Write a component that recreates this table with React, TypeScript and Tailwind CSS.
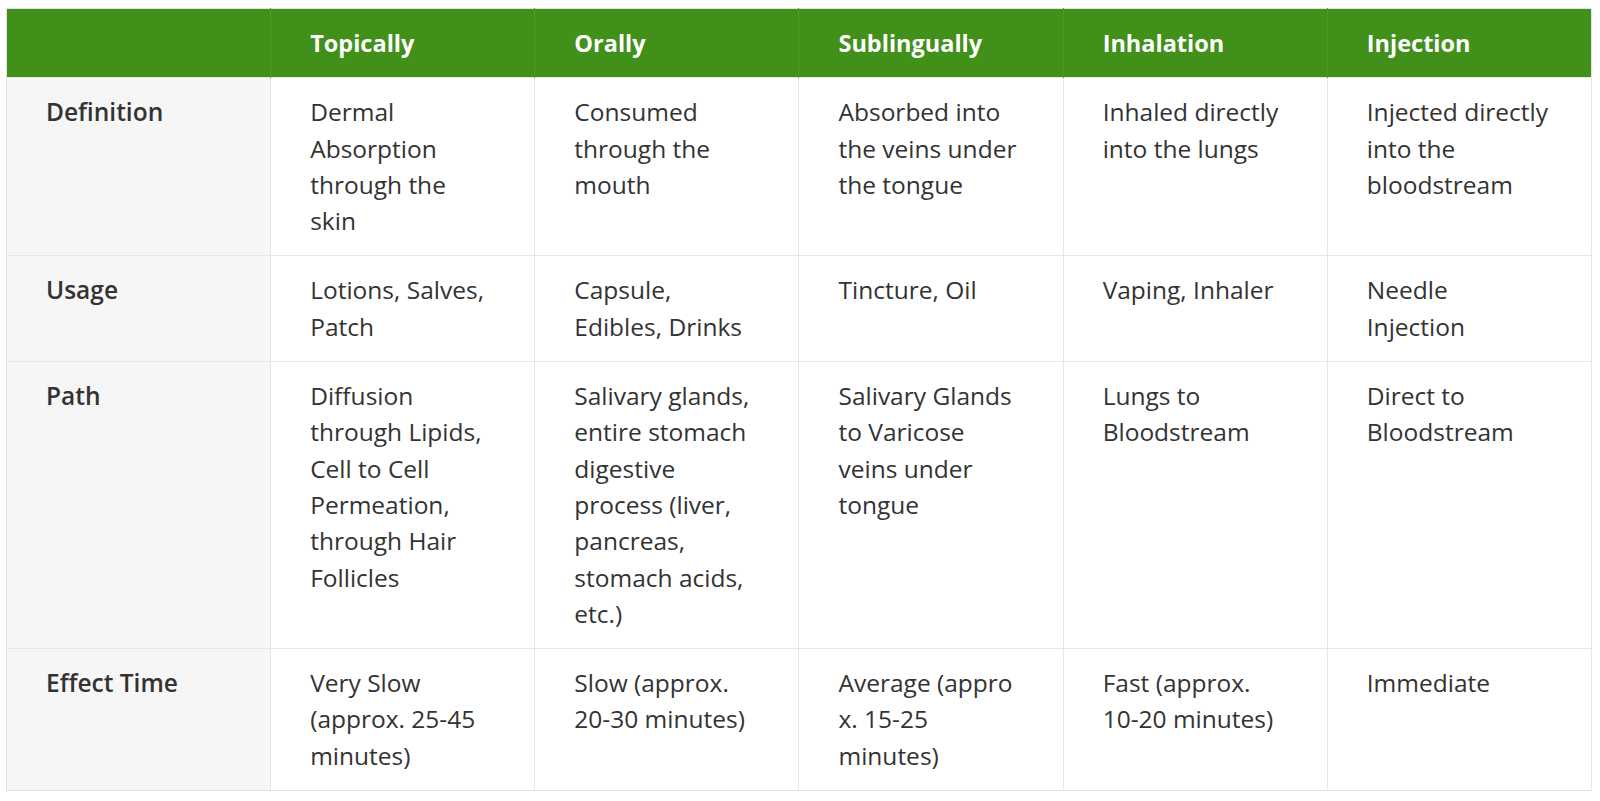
const headers = ['Topically', 'Orally', 'Sublingually', 'Inhalation', 'Injection'];

const rows: { label: string; cells: string[][] }[] = [
  {
    label: 'Definition',
    cells: [
      ['Dermal', 'Absorption', 'through the', 'skin'],
      ['Consumed', 'through the', 'mouth'],
      ['Absorbed into', 'the veins under', 'the tongue'],
      ['Inhaled directly', 'into the lungs'],
      ['Injected directly', 'into the', 'bloodstream'],
    ],
  },
  {
    label: 'Usage',
    cells: [
      ['Lotions, Salves,', 'Patch'],
      ['Capsule,', 'Edibles, Drinks'],
      ['Tincture, Oil'],
      ['Vaping, Inhaler'],
      ['Needle', 'Injection'],
    ],
  },
  {
    label: 'Path',
    cells: [
      ['Diffusion', 'through Lipids,', 'Cell to Cell', 'Permeation,', 'through Hair', 'Follicles'],
      ['Salivary glands,', 'entire stomach', 'digestive', 'process (liver,', 'pancreas,', 'stomach acids,', 'etc.)'],
      ['Salivary Glands', 'to Varicose', 'veins under', 'tongue'],
      ['Lungs to', 'Bloodstream'],
      ['Direct to', 'Bloodstream'],
    ],
  },
  {
    label: 'Effect Time',
    cells: [
      ['Very Slow', '(approx. 25-45', 'minutes)'],
      ['Slow (approx.', '20-30 minutes)'],
      ['Average (appro', 'x. 15-25', 'minutes)'],
      ['Fast (approx.', '10-20 minutes)'],
      ['Immediate'],
    ],
  },
];

export default function App() {
  return (
    <div className="min-h-screen bg-white pt-[8px] pl-[6px] font-['Open_Sans','Noto_Sans',sans-serif] text-[#333333]">
      <table className="w-[1586px] table-fixed border-collapse border border-[#e3e3e3] text-[24.5px] leading-[36.3px]">
        <thead>
          <tr className="bg-[#40901a] text-white">
            <th className="border-r border-[#4d9a2a] px-[39px] py-[16px] text-left text-[23.5px] font-bold"></th>
            {headers.map((h) => (
              <th key={h} className="border-r border-[#4d9a2a] px-[39px] py-[16px] text-left text-[23.5px] font-bold last:border-r-0">
                {h}
              </th>
            ))}
          </tr>
        </thead>
        <tbody>
          {rows.map((r) => (
            <tr key={r.label} className="border-t border-[#e6e6e6]">
              <td className="border-r border-[#e6e6e6] bg-[#f6f6f6] px-[39px] py-[16px] align-top font-semibold">
                {r.label}
              </td>
              {r.cells.map((lines, i) => (
                <td key={i} className="border-r border-[#e6e6e6] px-[39px] py-[16px] align-top">
                  {lines.map((l, j) => (
                    <span key={j} className="block whitespace-nowrap">{l}</span>
                  ))}
                </td>
              ))}
            </tr>
          ))}
        </tbody>
      </table>
    </div>
  );
}
